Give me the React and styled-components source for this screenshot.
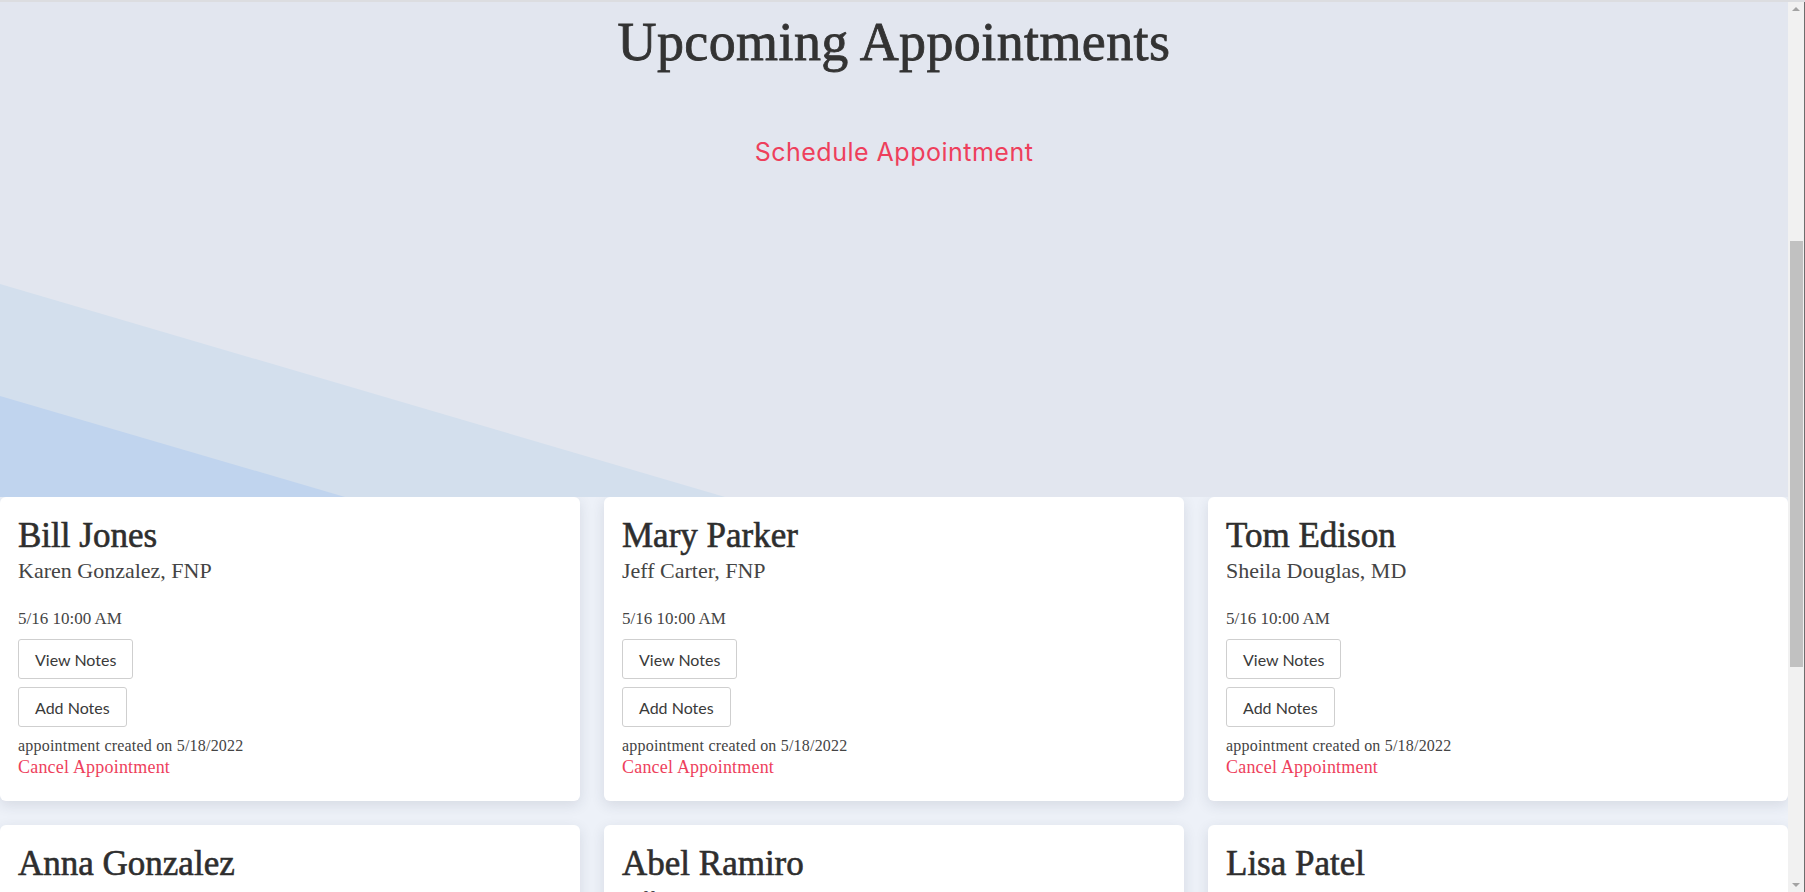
import React from 'react'
import styled, { createGlobalStyle } from 'styled-components'

const GlobalStyle = createGlobalStyle`
    body {
        margin: 0;
        background: #edf1f8;
        font-family: "Liberation Serif", serif;
        color: #333;
    }
`;

const Frame = styled.div`
    display: flex;
    flex-flow: row;
    height: 100vh;
    overflow: hidden;
    box-sizing: border-box;
    border-top: 2px solid #dcdde0;
`;
const Page = styled.div`
    flex: 1;
    display: flex;
    flex-flow: column;
    min-width: 0;
`;
const ScrollTrack = styled.div`
    width: 17px;
    flex-shrink: 0;
    background: #f1f1f1;
    display: flex;
    flex-flow: column;
    align-items: center;
    justify-content: space-between;
    padding: 5px 0;
    box-sizing: border-box;
    border-right: 1px solid #6d6d6d;
`;
const Arrow = styled.div`
    width: 0;
    height: 0;
    border-left: 4px solid transparent;
    border-right: 4px solid transparent;
    ${({down}) => down ? 'border-top: 4px solid #a3a3a3;' : 'border-bottom: 4px solid #a3a3a3;'}
`;
const Thumb = styled.div`
    width: 13px;
    height: 426px;
    margin-top: 230px;
    margin-bottom: auto;
    background: #c1c1c1;
`;
const Hero = styled.section`
    position: relative;
    height: 495px;
    flex-shrink: 0;
    background: #e2e6ef;
    overflow: hidden;
    display: flex;
    flex-flow: column;
    align-items: center;
`;
const Waves = styled.svg`
    position: absolute;
    left: 0;
    top: 0;
    width: 100%;
    height: 100%;
`;
const Title = styled.h1`
    position: relative;
    margin: 10px 0 0;
    font-family: "Liberation Serif", serif;
    font-weight: 400;
    font-size: 54px;
    line-height: 60px;
    color: #333;
    letter-spacing: 0.4px;
    -webkit-text-stroke: 0.8px #333;
`;
const ScheduleLink = styled.a`
    position: relative;
    margin-top: 65px;
    font-family: "Inter", "Noto Sans", sans-serif;
    font-size: 25px;
    line-height: 30px;
    color: #ee3f5c;
    letter-spacing: 0.5px;
    cursor: pointer;
`;
const Grid = styled.div`
    display: grid;
    grid-template-columns: repeat(3, 1fr);
    gap: 24px;
`;
const Card = styled.div`
    background: #fff;
    border-radius: 6px;
    box-shadow: 0 4px 14px rgba(40, 50, 70, 0.12);
    padding: 18px 18px 23px;
    display: flex;
    flex-flow: column;
    align-items: flex-start;
`;
const Patient = styled.h2`
    margin: 0;
    font-family: "Liberation Serif", serif;
    font-weight: 400;
    font-size: 35px;
    line-height: 42px;
    color: #2e2e2e;
    -webkit-text-stroke: 0.6px #2e2e2e;
`;
const Provider = styled.div`
    font-size: 22px;
    line-height: 28px;
    color: #444;
`;
const When = styled.div`
    margin-top: 23px;
    font-size: 17px;
    line-height: 22px;
    color: #444;
`;
const Button = styled.button`
    margin-top: ${({first}) => first ? '9px' : '8px'};
    height: 40px;
    padding: 0 16px;
    background: #fff;
    border: 1px solid #cfcfcf;
    border-radius: 3px;
    font-family: "Lato", "Open Sans", sans-serif;
    font-weight: 400;
    font-size: 16px;
    color: #3a3a3a;
    cursor: pointer;
`;
const Created = styled.div`
    margin-top: 9px;
    font-size: 16px;
    line-height: 20px;
    letter-spacing: 0.2px;
    color: #444;
`;
const Cancel = styled.a`
    font-size: 18px;
    line-height: 22px;
    letter-spacing: 0.2px;
    color: #ee3f5c;
    cursor: pointer;
`;

const appointments = [
    { patient: 'Bill Jones', provider: 'Karen Gonzalez, FNP' },
    { patient: 'Mary Parker', provider: 'Jeff Carter, FNP' },
    { patient: 'Tom Edison', provider: 'Sheila Douglas, MD' },
    { patient: 'Anna Gonzalez', provider: 'Sheila Douglas, MD' },
    { patient: 'Abel Ramiro', provider: 'Jeff Carter, FNP' },
    { patient: 'Lisa Patel', provider: 'Karen Gonzalez, FNP' },
]

const AppointmentCard = ({item}) => (
    <Card>
        <Patient>{item.patient}</Patient>
        <Provider>{item.provider}</Provider>
        <When>5/16 10:00 AM</When>
        <Button first>View Notes</Button>
        <Button>Add Notes</Button>
        <Created>appointment created on 5/18/2022</Created>
        <Cancel>Cancel Appointment</Cancel>
    </Card>
)

const App = () => {
    return (
        <Frame>
            <GlobalStyle />
            <Page>
                <Hero>
                    <Waves viewBox="0 0 1788 495" preserveAspectRatio="none">
                        <polygon points="0,282 725,495 0,495" fill="#d3dfed" />
                        <polygon points="0,394 345,495 0,495" fill="#c0d4ee" />
                    </Waves>
                    <Title>Upcoming Appointments</Title>
                    <ScheduleLink>Schedule Appointment</ScheduleLink>
                </Hero>
                <Grid>
                    {appointments.map(item => (
                        <AppointmentCard key={item.patient} item={item} />
                    ))}
                </Grid>
            </Page>
            <ScrollTrack>
                <Arrow />
                <Thumb />
                <Arrow down />
            </ScrollTrack>
        </Frame>
    )
}

export default App
